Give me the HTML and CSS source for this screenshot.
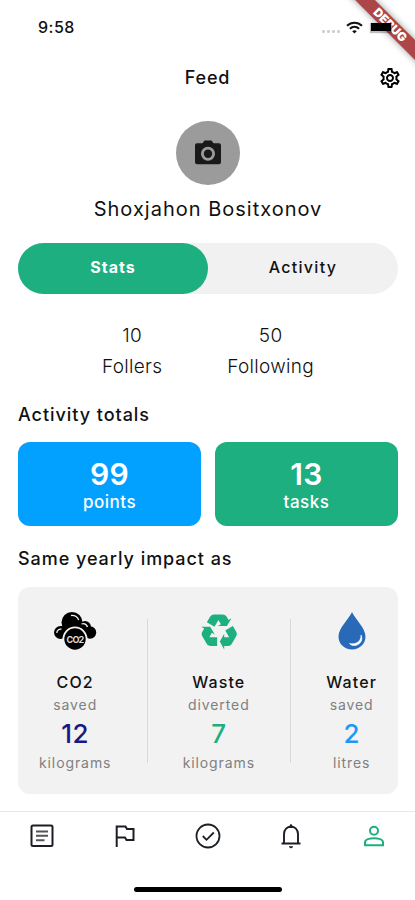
FILE: index.html
```
<!DOCTYPE html>
<html lang="en">
<head>
    <meta charset="UTF-8">
    <meta name="viewport" content="width=device-width, initial-scale=1.0">
    <title>Feed</title>
    <link rel="stylesheet" href="styles.css">
</head>
<body>
    <div class="status-bar">
        <span class="time">9:58</span>
        <div class="status-icons">
            <div class="signal"><i></i><i></i><i></i><i></i></div>
            <svg class="wifi" viewBox="0 0 17 13" fill="none" stroke="#111" stroke-width="2">
                <path d="M1 4.8C5.2 .6 11.8 .6 16 4.8"/>
                <path d="M3.9 7.8C6.6 5.2 10.4 5.2 13.1 7.8"/>
                <path d="M8.5 12.6L6.2 10.3C7.5 9 9.5 9 10.8 10.3Z" fill="#111" stroke="none"/>
            </svg>
            <span class="battery"></span>
        </div>
    </div>
    <div class="debug-corner"><span class="debug">DEBUG</span></div>

    <header>
        <h1>Feed</h1>
        <svg class="settings" viewBox="0 0 24 24"><path d="M19.43 12.98c.04-.32.07-.64.07-.98 0-.34-.03-.66-.07-.98l2.11-1.65c.19-.15.24-.42.12-.64l-2-3.46c-.09-.16-.26-.25-.44-.25-.06 0-.12.01-.17.03l-2.49 1c-.52-.4-1.08-.73-1.69-.98l-.38-2.65C14.46 2.18 14.25 2 14 2h-4c-.25 0-.46.18-.49.42l-.38 2.65c-.61.25-1.17.59-1.69.98l-2.49-1c-.06-.02-.12-.03-.18-.03-.17 0-.34.09-.43.25l-2 3.46c-.13.22-.07.49.12.64l2.11 1.65c-.04.32-.07.65-.07.98 0 .33.03.66.07.98l-2.11 1.65c-.19.15-.24.42-.12.64l2 3.46c.09.16.26.25.44.25.06 0 .12-.01.17-.03l2.49-1c.52.4 1.08.73 1.69.98l.38 2.65c.03.24.24.42.49.42h4c.25 0 .46-.18.49-.42l.38-2.65c.61-.25 1.17-.59 1.69-.98l2.49 1c.06.02.12.03.18.03.17 0 .34-.09.43-.25l2-3.46c.12-.22.07-.49-.12-.64l-2.11-1.65zm-1.98-1.71c.04.31.05.52.05.73 0 .21-.02.43-.05.73l-.14 1.13.89.7 1.08.84-.7 1.21-1.27-.51-1.04-.42-.9.68c-.43.32-.84.56-1.25.73l-1.06.43-.16 1.13-.2 1.35h-1.4l-.19-1.35-.16-1.13-1.06-.43c-.43-.18-.83-.41-1.23-.71l-.91-.7-1.06.43-1.27.51-.7-1.21 1.08-.84.89-.7-.14-1.13c-.03-.31-.05-.54-.05-.74s.02-.43.05-.73l.14-1.13-.89-.7-1.08-.84.7-1.21 1.27.51 1.04.42.9-.68c.43-.32.84-.56 1.25-.73l1.06-.43.16-1.13.2-1.35h1.39l.19 1.35.16 1.13 1.06.43c.43.18.83.41 1.23.71l.91.7 1.06-.43 1.27-.51.7 1.21-1.07.85-.89.7.14 1.13zM12 8c-2.21 0-4 1.79-4 4s1.79 4 4 4 4-1.79 4-4-1.79-4-4-4zm0 6c-1.1 0-2-.9-2-2s.9-2 2-2 2 .9 2 2-.9 2-2 2z"/></svg>
    </header>

    <main>
        <div class="profile">
            <div class="avatar">
                <svg viewBox="0 0 26 26" fill="#191919">
                    <path fill-rule="evenodd" d="M2 3.2H7.5L9.500 .5H16.500L18.500 3.200H24A2 2 0 0 1 26 5.200V22.200A2 2 0 0 1 24 24.200H2A2 2 0 0 1 0 22.200V5.200A2 2 0 0 1 2 3.200ZM13 6.700A7 7 0 1 0 13 20.700A7 7 0 1 0 13 6.700Z"/>
                    <circle cx="13" cy="13.700" r="4.200"/>
                </svg>
            </div>
            <p class="name">Shoxjahon Bositxonov</p>
        </div>

        <div class="tabs">
            <div class="tab active">Stats</div>
            <div class="tab">Activity</div>
        </div>

        <div class="follow">
            <div class="follow-item"><span>10</span><span>Follers</span></div>
            <div class="follow-item"><span>50</span><span>Following</span></div>
        </div>

        <h2>Activity totals</h2>
        <div class="totals">
            <div class="total blue"><strong>99</strong><span>points</span></div>
            <div class="total green"><strong>13</strong><span>tasks</span></div>
        </div>

        <h2>Same yearly impact as</h2>
        <div class="impact">
            <div class="impact-item">
                <svg viewBox="0 0 44 40">
                    <g fill="#000">
                        <circle cx="7.5" cy="21.5" r="6.5"/>
                        <circle cx="19" cy="11.5" r="10.5"/>
                        <circle cx="32" cy="16" r="6"/>
                        <circle cx="37" cy="21.5" r="6.2"/>
                        <rect x="8" y="15" width="28" height="12"/>
                    </g>
                    <path d="M18 4.5C21.5 4.2 24.5 6 25.7 9M28.5 13C31 12.2 33.5 13.5 34.5 16M3.8 22C3.8 19.5 6 17.8 8.5 18.2" fill="none" stroke="#f2f2f2" stroke-width="1.3"/>
                    <circle cx="22" cy="28" r="11.6" fill="#000" stroke="#f2f2f2" stroke-width="1.8"/>
                    <text x="22" y="31.5" class="co2-label">CO2</text>
                </svg>
                <b>CO2</b>
                <small>saved</small>
                <strong class="navy">12</strong>
                <small>kilograms</small>
            </div>
            <div class="divider"></div>
            <div class="impact-item">
                <svg viewBox="0 0 44 40" fill="#1daf80">
                    <path transform="translate(.8 -2) scale(1.76)" d="M21.82,15.42L19.32,19.75C18.83,20.61 17.92,21.06 17,21H15V23L12.5,18.5L15,14V16H17.82L15.6,12.15L19.93,9.65L21.73,12.77C22.25,13.54 22.32,14.57 21.82,15.42M9.21,3.06H14.21C15.19,3.06 16.04,3.63 16.45,4.45L17.45,6.19L19.18,5.19L16.54,9.6L11.39,9.69L13.12,8.69L11.71,6.24L9.5,10.09L5.16,7.59L6.96,4.47C7.37,3.64 8.22,3.06 9.21,3.06M5.05,19.76L2.55,15.43C2.06,14.58 2.13,13.56 2.64,12.79L3.64,11.06L1.91,10.06L7.05,10.14L9.7,14.56L7.97,13.56L6.56,16H11V21H7.4C6.47,21.07 5.55,20.61 5.05,19.76Z"/>
                </svg>
                <b>Waste</b>
                <small>diverted</small>
                <strong class="teal">7</strong>
                <small>kilograms</small>
            </div>
            <div class="divider"></div>
            <div class="impact-item">
                <svg viewBox="0 0 44 40">
                    <path d="M22 1C25 8 35.5 17 35.5 25.5C35.5 33 29.5 38.5 22 38.5S8.5 33 8.5 25.5C8.5 17 19 8 22 1Z" fill="#286ab8"/>
                    <path d="M31 24C31.5 30 26 34 19.5 32.5C22 36.3 30.5 34.5 31.6 29C32 27 31.8 25.5 31 24Z" fill="#fff" stroke="#fff" stroke-width=".6"/>
                </svg>
                <b>Water</b>
                <small>saved</small>
                <strong class="sky">2</strong>
                <small>litres</small>
            </div>
        </div>
    </main>

    <nav>
        <svg viewBox="0 0 26 26" fill="none" stroke="#1c1e26" stroke-width="2">
            <rect x="2.5" y="2.5" width="21" height="20.5" rx="1.5"/>
            <path d="M7 8.5H19M7 12.8H19M7 17.2H15.5" stroke="#555"/>
        </svg>
        <svg viewBox="0 0 26 26" fill="none" stroke="#1c1e26" stroke-width="2">
            <path d="M4.7 24V3.5H13.5L15 6H21.5V17H14.5L13 14.5H4.7"/>
        </svg>
        <svg viewBox="0 0 26 26" fill="none" stroke="#1c1e26" stroke-width="1.8">
            <circle cx="13" cy="13" r="11.5"/>
            <path d="M7.8 13L11.5 16.8L18.8 9.5"/>
        </svg>
        <svg viewBox="0 0 26 26" fill="none" stroke="#1c1e26" stroke-width="1.9">
            <path d="M3.5 20.5H22.5M6 20.5V11A7 7.5 0 0 1 20 11V20.5"/>
            <path d="M11 4.5L13 1.3L15 4.5ZM11.3 23.8H14.7L13 25Z" fill="#1c1e26" stroke-width="1"/>
        </svg>
        <svg viewBox="0 0 26 26" fill="none" stroke="#1daf80" stroke-width="2">
            <circle cx="13" cy="7.7" r="4"/>
            <path d="M4 22.3V19.5C4 16.5 9 15.3 13 15.3S22 16.5 22 19.5V22.3Z"/>
        </svg>
    </nav>
    <div class="home-indicator"></div>
</body>
</html>
```
FILE: styles.css
```
* {
    box-sizing: border-box;
}

body {
    font-family: Inter, sans-serif;
    background-color: #fff;
    color: #111;
    margin: 0;
    height: 900px;
    display: flex;
    flex-direction: column;
    overflow: hidden;
    position: relative;
}

h1, h2, p {
    margin: 0;
}

svg {
    display: block;
}

/* Status bar */
.status-bar {
    height: 54px;
    padding: 0 24px 0 38px;
    display: flex;
    align-items: center;
    justify-content: space-between;
}

.time {
    font-size: 16px;
    font-weight: 500;
    letter-spacing: 0.5px;
}

.status-icons {
    display: flex;
    align-items: center;
}

.signal {
    display: flex;
    gap: 2px;
    margin: 8px 6px 0 0;
}

.signal i {
    width: 3px;
    height: 3px;
    border-radius: 1px;
    background-color: #d0d0d0;
}

.wifi {
    width: 17px;
    height: 13px;
    margin-right: 8px;
}

.battery {
    width: 20px;
    height: 8px;
    background-color: #000;
    box-shadow: 0 1px 1px 1px rgba(0, 0, 0, 0.25);
    position: relative;
    z-index: 2;
}

/* Debug ribbon over the corner */
.debug-corner {
    position: absolute;
    top: 0;
    right: 0;
    width: 80px;
    height: 80px;
    overflow: hidden;
}

.debug {
    position: absolute;
    top: 18px;
    left: 0;
    width: 110px;
    height: 14px;
    line-height: 14px;
    text-align: center;
    background-color: #ad4648;
    color: #fff;
    font-size: 12px;
    font-weight: 900;
    transform: rotate(45deg);
    box-shadow: 0 0 7px rgba(0, 0, 0, 0.4);
}

header {
    height: 47px;
    display: grid;
    grid-template-columns: 1fr auto 1fr;
    align-items: center;
    padding: 0 13px;
}

h1 {
    grid-column: 2;
    font-size: 18px;
    font-weight: 500;
    letter-spacing: 0.8px;
}

.settings {
    width: 24px;
    height: 24px;
    justify-self: end;
}

main {
    padding: 20px 17px 0 18px;
}

.profile {
    display: flex;
    flex-direction: column;
    align-items: center;
}

.avatar {
    width: 64px;
    height: 64px;
    border-radius: 50%;
    background-color: #9b9b9b;
    display: flex;
    align-items: center;
    justify-content: center;
}

.avatar svg {
    width: 26px;
    height: 26px;
}

.name {
    margin-top: 9px;
    font-size: 20px;
    line-height: 30px;
    letter-spacing: 1px;
}

.tabs {
    margin-top: 19px;
    height: 51px;
    display: flex;
    background-color: #f1f1f1;
    border-radius: 26px;
}

.tab {
    flex: 1;
    line-height: 49px;
    text-align: center;
    font-size: 16px;
    font-weight: 500;
    letter-spacing: 1.3px;
    border-radius: 26px;
}

.tab.active {
    background-color: #1daf80;
    color: #fff;
    font-weight: 700;
    letter-spacing: 1px;
}

.follow {
    margin-top: 26px;
    display: flex;
    justify-content: center;
    gap: 65px;
}

.follow-item {
    display: flex;
    flex-direction: column;
    align-items: center;
    font-size: 19px;
    line-height: 31px;
    font-weight: 300;
    letter-spacing: 0.3px;
}

h2 {
    margin-top: 19px;
    font-size: 18px;
    line-height: 28px;
    font-weight: 500;
    letter-spacing: 0.95px;
}

.totals {
    margin-top: 13px;
    display: flex;
    gap: 14px;
}

.total {
    flex: 1;
    height: 84px;
    border-radius: 12px;
    color: #fff;
    display: flex;
    flex-direction: column;
    align-items: center;
    padding-top: 15px;
    font-size: 17px;
    font-weight: 500;
    letter-spacing: 0.5px;
}

.total strong {
    font-size: 30px;
    line-height: 35px;
    font-weight: 600;
    letter-spacing: 0.3px;
}

.total span {
    line-height: 20px;
}

.blue {
    background-color: #02a1ff;
}

.green {
    background-color: #1daf80;
}

.impact {
    margin-top: 14px;
    height: 207px;
    background-color: #f2f2f2;
    border-radius: 12px;
    display: flex;
    justify-content: space-between;
    padding: 24px 21px 0 21px;
}

.impact-item {
    display: flex;
    flex-direction: column;
    align-items: center;
}

.impact-item svg {
    width: 44px;
    height: 40px;
    margin-bottom: 19px;
}

.impact-item b {
    font-size: 16px;
    line-height: 24px;
    font-weight: 500;
    letter-spacing: 1.1px;
}

.impact-item small {
    font-size: 14px;
    line-height: 22px;
    color: #808080;
    letter-spacing: 0.9px;
}

.impact-item strong {
    font-size: 26px;
    line-height: 36px;
    font-weight: 500;
    letter-spacing: 0.5px;
}

.co2-label {
    font-size: 9px;
    font-weight: 700;
    letter-spacing: -0.8px;
    text-anchor: middle;
    fill: #ddd;
}

.divider {
    width: 1px;
    height: 144px;
    margin-top: 8px;
    background-color: #d9d9d9;
}

.navy {
    color: #191983;
}

.teal {
    color: #1daf80;
}

.sky {
    color: #1d98f4;
}

/* Bottom navigation */
nav {
    margin-top: auto;
    height: 76px;
    flex-shrink: 0;
    border-top: 1px solid #e8e8e8;
    display: flex;
    justify-content: space-around;
    padding-top: 11px;
}

nav svg {
    width: 26px;
    height: 26px;
}

.home-indicator {
    width: 148px;
    height: 5px;
    margin: 0 auto 8px;
    border-radius: 3px;
    background-color: #000;
    flex-shrink: 0;
}
```
